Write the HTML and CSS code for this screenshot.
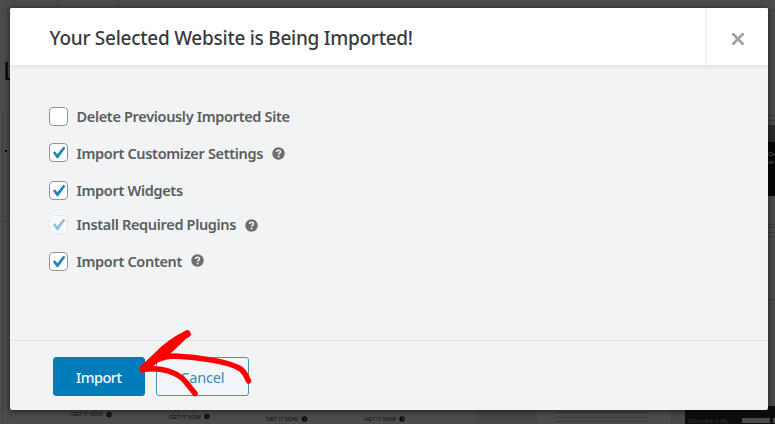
FILE: index.html
```
<!DOCTYPE html>
<html lang="en">
<head>
<meta charset="utf-8">
<title>Import Website</title>
<link rel="stylesheet" href="styles.css">
</head>
<body>
<svg class="backdrop" width="775" height="424" viewBox="0 0 775 424" aria-hidden="true">
  <rect width="775" height="424" fill="#4b4b4b"/>
  <path d="M57.5 0V9M118.500 0V9M0 9.500H10M768 10.500H775M2.500 112V424M0 221.500H10" stroke="#404040" fill="none"/>
  <text x="3" y="80" class="backdrop-heading">L</text>
  <rect x="5" y="150" width="2" height="2" fill="#000"/>
  <path d="M768 115.500H775M768 120.500H775M768 224.500H775M768 227.500H775M768 232.500H775M768 236.500H775M768 299.500H775" stroke="#3c3c3c"/>
  <rect x="766" y="125" width="9" height="71" fill="#050606"/>
  <rect x="766" y="125" width="9" height="17" fill="#292929"/>
  <text x="768" y="156" class="backdrop-small">Ou</text>
  <text x="768" y="164" class="backdrop-small">sir</text>
  <rect x="478" y="410" width="207" height="14" fill="#464746"/>
  <rect x="538" y="410" width="132" height="14" fill="#4b4d4a"/>
  <path d="M555 412.500H648M555 417.500H648M555 421.500H648" stroke="#3b3d3a"/>
  <rect x="685" y="406" width="90" height="18" fill="#0d0d0d"/>
  <rect x="742" y="418" width="28" height="5" fill="#4a4a4a"/>
  <rect x="773" y="418" width="2" height="5" fill="#4a4a4a"/>
  <text x="688" y="423" class="backdrop-dim" textLength="40">Subscribe to My</text>
  <g class="backdrop-link">
    <text x="71" y="416" textLength="32">GET IT NOW</text>
    <text x="169" y="418.500" textLength="32">GET IT NOW</text>
    <text x="266" y="421" textLength="32">GET IT NOW</text>
    <text x="364" y="421" textLength="32">GET IT NOW</text>
  </g>
  <g fill="#0c0c0c"><circle cx="109" cy="414.500" r="2.700"/><circle cx="207" cy="416.500" r="2.700"/><circle cx="304.500" cy="419" r="2.700"/><circle cx="402" cy="419" r="2.700"/></g>
  <path d="M108.500 413l1.500 1.500-1.500 1.500M206.500 415l1.500 1.500-1.500 1.500M304 417.500l1.500 1.500-1.500 1.500M401.500 417.500l1.500 1.500-1.500 1.500" stroke="#555" stroke-width=".6" fill="none"/>
</svg>
<svg width="0" height="0" class="symbols">
  <symbol id="help" viewBox="0 0 13 13">
    <circle cx="6.500" cy="6.500" r="6.200" fill="#6b6d6f"/>
    <path d="M4.500 5.100C4.500 2.600 8.500 2.600 8.500 4.900C8.500 6.200 6.600 6.200 6.600 7.600" fill="none" stroke="#f1f3f5" stroke-width="1.600"/>
    <rect x="5.700" y="8.600" width="1.800" height="1.700" fill="#f1f3f5"/>
  </symbol>
  <symbol id="check" viewBox="0 0 19 19">
    <path d="M3.900 9.800L6 8.300L8.300 11.200L14.300 3.800L16.500 4.900L9.100 15.200H7.800Z" fill="#1e86bd"/>
  </symbol>
</svg>
<main class="modal">
  <header class="modal-header">
    <h1 class="title">Your Selected Website is Being Imported!</h1>
    <button class="close" aria-label="Close"><svg width="14" height="14" viewBox="0 0 14 14"><path d="M2.300 2.300L11.700 11.700M11.700 2.300L2.300 11.700" stroke="#a0a0a0" stroke-width="2.700" stroke-linecap="round"/></svg></button>
  </header>
  <section class="options">
    <div class="option option-delete"><span class="box"></span><span class="label">Delete Previously Imported Site</span></div>
    <div class="option option-customizer"><span class="box"><svg class="tick"><use href="#check"/></svg></span><span class="label low">Import Customizer Settings</span><svg class="help"><use href="#help"/></svg></div>
    <div class="option option-widgets"><span class="box"><svg class="tick"><use href="#check"/></svg></span><span class="label">Import Widgets</span></div>
    <div class="option option-plugins"><span class="box disabled"><svg class="tick"><use href="#check"/></svg></span><span class="label">Install Required Plugins</span><svg class="help"><use href="#help"/></svg></div>
    <div class="option option-content"><span class="box"><svg class="tick"><use href="#check"/></svg></span><span class="label">Import Content</span><svg class="help raised"><use href="#help"/></svg></div>
  </section>
  <footer class="modal-footer">
    <button class="button primary">Import</button>
    <button class="button secondary">Cancel</button>
  </footer>
</main>
<svg class="arrow" width="120" height="72" viewBox="135 328 120 72" aria-hidden="true">
  <g fill="none" stroke="#fe0000" stroke-linecap="round" stroke-linejoin="round">
    <path d="M187 334C175 340 165 347 157 356L143 369" stroke-width="7.500"/>
    <path d="M144 369C155 359 163 356.500 175 356C200 357 228 362 239 368C245 371 246 376 248.500 381" stroke-width="5.500"/>
    <path d="M143 369.500C160 367 176 371 185 381L195 393.500" stroke-width="5.500"/>
  </g>
  <path d="M143 366L156 353L189 336L170 354L158 362L148 371Z" fill="#fe0000"/>
</svg>
</body>
</html>
```

FILE: styles.css
```
* { box-sizing: border-box; }
body {
  margin: 0;
  width: 775px;
  height: 424px;
  overflow: hidden;
  position: relative;
  padding: 8px 0 0 9.5px;
  background: #4b4b4b;
  font-family: "Noto Sans", "Open Sans", sans-serif;
}
.backdrop { position: absolute; left: 0; top: 0; }
.symbols { position: absolute; }
.backdrop-heading { font: 25px "Noto Sans", sans-serif; fill: #050505; }
.backdrop-small { font: 6px "Liberation Sans", sans-serif; fill: #686868; }
.backdrop-dim { font: 5px "Liberation Sans", sans-serif; fill: #3a3a3a; }
.backdrop-link { font: 5.5px "Liberation Sans", sans-serif; fill: #111; }
.modal {
  position: relative;
  display: flex;
  flex-direction: column;
  width: 758.5px;
  height: 402px;
  border-radius: 2px;
  overflow: hidden;
  background: #f1f3f5;
  box-shadow: 0 1px 6px rgba(0, 0, 0, .65);
}
.modal-header {
  display: flex;
  height: 57px;
  flex: none;
  background: #fff;
  box-shadow: 0 1px 5px rgba(0, 0, 0, .1);
}
.title {
  flex: 1;
  margin: 0;
  padding-left: 40px;
  font-size: 19px;
  font-weight: 500;
  letter-spacing: -.26px;
  line-height: 60px;
  color: #383b3e;
  white-space: nowrap;
}
.close {
  display: flex;
  align-items: center;
  justify-content: center;
  width: 63px;
  border: 0;
  border-left: 2px solid #f3f3f3;
  background: #fff;
  padding: 4px 0 0;
}
.options { flex: 1; display: flex; flex-direction: column; padding: 42px 0 0 39.500px; }
.option { display: flex; align-items: center; height: 19px; }
.option-customizer { margin-top: 17px; }
.option-widgets { margin-top: 19px; }
.option-plugins { margin-top: 15px; }
.option-content { margin-top: 18px; }
.box {
  width: 19px;
  height: 19px;
  flex: none;
  border: 1.5px solid #8f9499;
  border-radius: 4px;
  background: #fff;
}
.disabled { opacity: .45; border-color: #dce2e6; }
.tick { display: block; width: 19px; height: 19px; margin: -1px; }
.label {
  margin-left: 8.5px;
  font-size: 14.5px;
  font-weight: 600;
  letter-spacing: -.33px;
  line-height: 19px;
  color: #5a5d60;
  white-space: nowrap;
}
.low { padding-top: 1px; }
.help { width: 13px; height: 13px; margin-left: 9px; margin-top: 2px; }
.raised { margin-top: -3px; }
.modal-footer {
  display: flex;
  gap: 11px;
  height: 70px;
  padding: 16px 0 0 43px;
  border-top: 1px solid #e0e3e5;
}
.button {
  height: 39px;
  width: 92.5px;
  padding: 1px 0 0;
  border-radius: 3px;
  font-family: inherit;
  font-size: 14.5px;
}
.primary { border: 1px solid #0079b6; background: #007cba; color: #f4faff; font-weight: 500; letter-spacing: -.5px; }
.secondary { border: 1px solid #4f91b1; background: #f2f5f7; color: #3889b1; letter-spacing: -.2px; }
.arrow { position: absolute; left: 135px; top: 328px; }
```
